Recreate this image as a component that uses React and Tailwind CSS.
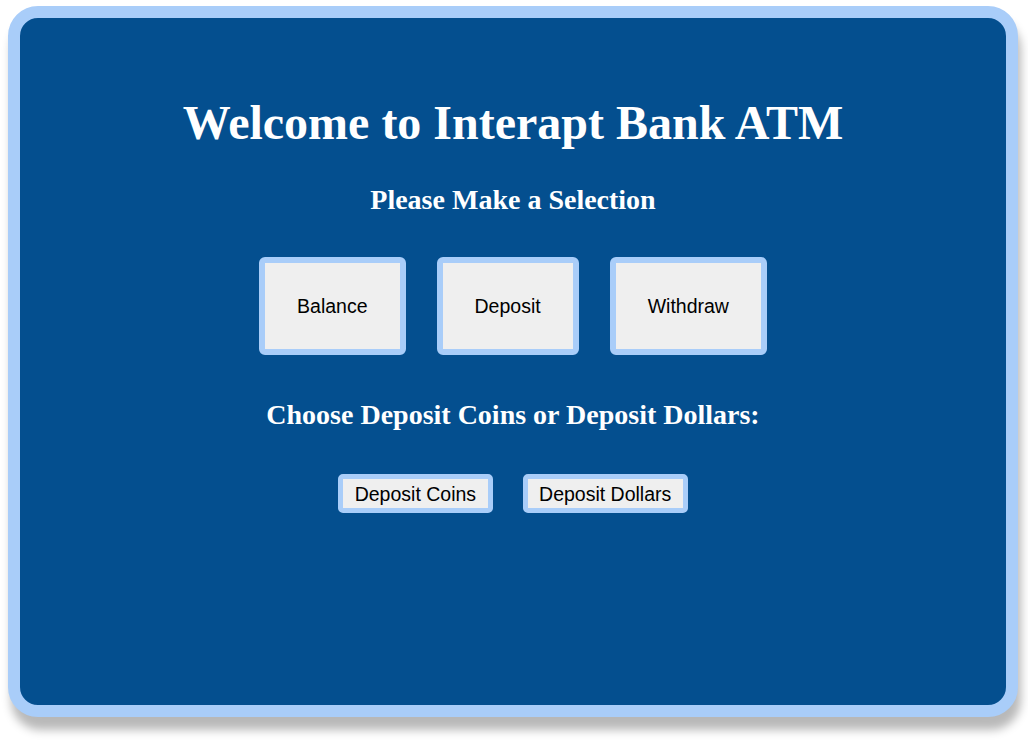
import React from 'react';

const bigBtn =
  "bg-[#efefef] border-[6px] border-[#a9cdf9] rounded-[6px] px-[32px] py-[32px] text-[19.5px] leading-[22px] text-black font-['Liberation_Sans',Arial,sans-serif]";
const smallBtn =
  "bg-[#efefef] border-[5px] border-[#a9cdf9] rounded-[5px] px-[11.5px] py-[3.5px] text-[19.5px] leading-[22px] text-black font-['Liberation_Sans',Arial,sans-serif]";

const App = () => {
  return (
    <div className="w-[1028px] h-[751px] bg-white pt-[6px] pl-[8px]">
      {/* ATM frame */}
      <div className="w-[1010px] h-[711px] border-[12px] border-[#a9cdf9] rounded-[30px] bg-[#044f8f] shadow-[3px_13px_10px_rgba(0,0,0,0.28)] flex flex-col items-center text-white font-['Liberation_Serif','Times_New_Roman',serif]">
        <h1 className="mt-[77px] text-[48px] leading-[56px] font-bold">Welcome to Interapt Bank ATM</h1>
        <h2 className="mt-[33px] text-[28px] leading-[32px] font-bold">Please Make a Selection</h2>

        <div className="mt-[41px] flex gap-[31px]">
          <button className={bigBtn}>Balance</button>
          <button className={bigBtn}>Deposit</button>
          <button className={bigBtn}>Withdraw</button>
        </div>

        <h2 className="mt-[44px] text-[28px] leading-[32px] font-bold">Choose Deposit Coins or Deposit Dollars:</h2>

        <div className="mt-[43px] flex gap-[30px]">
          <button className={smallBtn}>Deposit Coins</button>
          <button className={smallBtn}>Deposit Dollars</button>
        </div>
      </div>
    </div>
  );
};

export default App;
